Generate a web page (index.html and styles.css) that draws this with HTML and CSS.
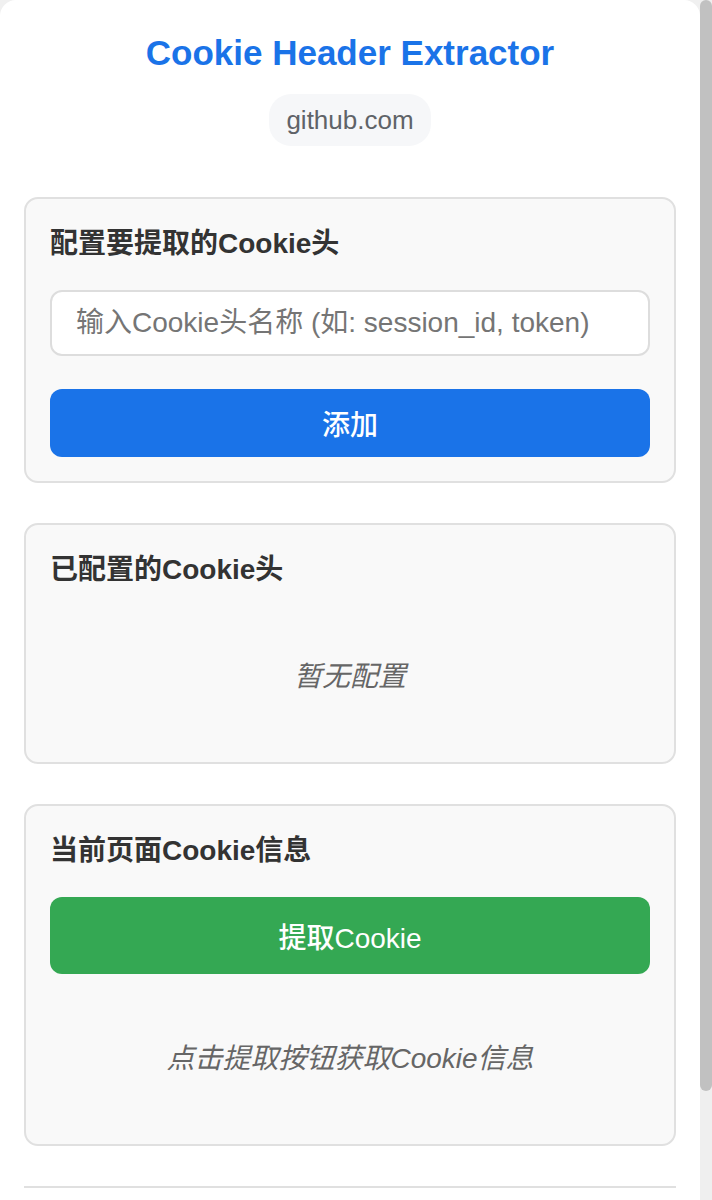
FILE: index.html
```html
<!DOCTYPE html>
<html lang="zh-CN">
<head>
<meta charset="utf-8">
<title>Cookie Header Extractor</title>
<link rel="stylesheet" href="styles.css">
</head>
<body class="page">
  <div class="popup">
    <header class="header">
      <h1 class="title">Cookie Header Extractor</h1>
      <div class="domain">github.com</div>
    </header>

    <section class="card">
      <h2 class="card-title">配置要提取的Cookie头</h2>
      <input class="field" type="text" placeholder="输入Cookie头名称 (如: session_id, token)">
      <button class="btn btn-blue" type="button">添加</button>
    </section>

    <section class="card">
      <h2 class="card-title">已配置的Cookie头</h2>
      <div class="empty">暂无配置</div>
    </section>

    <section class="card">
      <h2 class="card-title">当前页面Cookie信息</h2>
      <button class="btn btn-green" type="button">提取Cookie</button>
      <div class="result">
        <div class="empty">点击提取按钮获取Cookie信息</div>
      </div>
    </section>

    <footer class="footer"></footer>
  </div>

  <div class="scrollbar" aria-hidden="true">
    <div class="scrollbar-thumb"></div>
  </div>
</body>
</html>
```
FILE: styles.css
```css
html {
  background: #f0f0f0;
}

.page {
  margin: 0;
  padding-right: 12px;
  font-family: "Liberation Sans", "Noto Sans CJK SC", sans-serif;
  color: #333;
}

.scrollbar {
  position: fixed;
  top: 0;
  right: 0;
  width: 12px;
  height: 100vh;
  background: #efefef;
}

.scrollbar-thumb {
  height: 1091px;
  background: #c1c1c1;
  border-radius: 6px;
}

.popup {
  background: #ffffff;
  border-radius: 16px;
  padding: 31px 24px 32px;
}

.header {
  display: flex;
  flex-direction: column;
  align-items: center;
  margin-bottom: 51px;
}

.title {
  margin: 2px 0 21px;
  font-size: 35px;
  line-height: 40px;
  font-weight: 700;
  color: #1a73e8;
}

.domain {
  padding: 11px 17px;
  font-size: 26px;
  line-height: 30px;
  color: #5f6368;
  background: #f6f7f9;
  border-radius: 22px;
}

.card {
  background: #f9f9f9;
  border: 2px solid #e0e0e0;
  border-radius: 14px;
  padding: 24px;
  margin-bottom: 40px;
  display: flex;
  flex-direction: column;
}

.card-title {
  margin: 0 0 25px;
  font-size: 28px;
  line-height: 42px;
  font-weight: 700;
  color: #333;
}

.field {
  box-sizing: border-box;
  width: 100%;
  height: 66px;
  margin: 0 0 33px;
  padding: 0 24px;
  border: 2px solid #dddddd;
  border-radius: 12px;
  background: #ffffff;
  font-family: inherit;
  font-size: 28px;
  color: #333;
  outline: none;
}
.field::placeholder {
  color: #757575;
}

.btn {
  width: 100%;
  border: none;
  border-radius: 12px;
  color: #ffffff;
  font-family: inherit;
  font-size: 28px;
  font-weight: 500;
  padding: 0;
}

.btn-blue {
  height: 68px;
  background: #1a73e8;
}

.btn-green {
  height: 77px;
  background: #34a853;
}

.result {
  margin-top: 24px;
}

.empty {
  padding: 40px 0;
  text-align: center;
  font-size: 28px;
  line-height: 42px;
  font-style: italic;
  color: #666;
}

.footer {
  border-top: 2px solid #e0e0e0;
  height: 70px;
}
```
